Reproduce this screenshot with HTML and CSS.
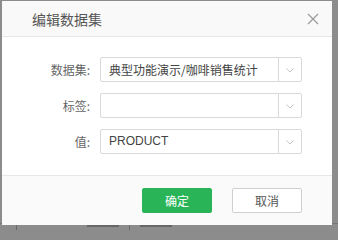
FILE: index.html
```html
<!DOCTYPE html>
<html lang="zh">
<head>
<meta charset="utf-8">
<link rel="stylesheet" href="styles.css">
</head>
<body>
<div class="page">
  <div class="bg-row">
    <span class="bg-cell bg-first"></span>
    <span class="bg-cell bg-mid"><i class="bg-mark"></i></span>
    <span class="bg-cell bg-last"><i class="bg-mark"></i></span>
  </div>
</div>
<div class="dialog">
  <div class="dlg-header">
    <span class="dlg-title">编辑数据集</span>
    <svg class="dlg-close" width="12" height="12" viewBox="0 0 12 12"><path d="M1 1L11 11M11 1L1 11" stroke="#9a9a9a" stroke-width="1.2" fill="none"/></svg>
  </div>
  <div class="dlg-body">
    <div class="form-row">
      <label class="form-label">数据集:</label>
      <div class="combo">
        <span class="combo-text">典型功能演示/咖啡销售统计</span>
        <span class="combo-arrow"><svg width="8" height="5" viewBox="0 0 8 5"><path d="M0.5 0.5L4 4L7.5 0.5" stroke="#c4c4c4" stroke-width="1" fill="none"/></svg></span>
      </div>
    </div>
    <div class="form-row">
      <label class="form-label">标签:</label>
      <div class="combo">
        <span class="combo-text"></span>
        <span class="combo-arrow"><svg width="8" height="5" viewBox="0 0 8 5"><path d="M0.5 0.5L4 4L7.5 0.5" stroke="#c4c4c4" stroke-width="1" fill="none"/></svg></span>
      </div>
    </div>
    <div class="form-row">
      <label class="form-label">值:</label>
      <div class="combo">
        <span class="combo-text latin">PRODUCT</span>
        <span class="combo-arrow"><svg width="8" height="5" viewBox="0 0 8 5"><path d="M0.5 0.5L4 4L7.5 0.5" stroke="#c4c4c4" stroke-width="1" fill="none"/></svg></span>
      </div>
    </div>
  </div>
  <div class="dlg-footer">
    <button class="btn btn-primary">确定</button>
    <button class="btn btn-default">取消</button>
  </div>
</div>
</body>
</html>
```
FILE: styles.css
```css
html, body {
  margin: 0;
  padding: 0;
}
body {
  width: 338px;
  height: 230px;
  overflow: hidden;
  background: #8c8c8c;
  font-family: "Liberation Sans", "Noto Sans CJK SC", sans-serif;
  position: relative;
}
.page {
  height: 230px;
  display: flex;
  flex-direction: column;
  justify-content: flex-end;
}
.bg-row {
  display: flex;
  height: 6px;
  border-top: 1px solid #777;
  overflow: hidden;
}
.bg-cell {
  border-right: 1px solid #6a6a6a;
  display: flex;
  align-items: flex-start;
  padding-top: 1px;
}
.bg-first { width: 16px; }
.bg-mid { width: 113px; justify-content: flex-end; padding-right: 10px; box-sizing: border-box; }
.bg-last { padding-left: 10px; border-right: none; }
.bg-mark {
  display: block;
  width: 32px;
  height: 2px;
  background: #666;
}

.dialog {
  position: absolute;
  left: 2px;
  top: 1px;
  width: 330px;
  height: 224px;
  background: #fff;
  display: flex;
  flex-direction: column;
}
.dlg-header {
  height: 35px;
  border-bottom: 1px solid #e6e6e6;
  background: #f9f9f9;
  display: flex;
  align-items: center;
  justify-content: space-between;
  padding: 0 13px 0 30px;
}
.dlg-title {
  font-size: 14px;
  color: #555;
  font-family: "Noto Sans CJK SC", sans-serif;
}
.dlg-close {
  display: block;
  margin-top: 1px;
}
.dlg-body {
  flex: 1;
  padding: 20px 30px 0 0;
  display: flex;
  flex-direction: column;
  gap: 11px;
}
.form-row {
  display: flex;
  align-items: center;
  height: 25px;
}
.form-label {
  width: 88px;
  text-align: right;
  padding-right: 10px;
  font-size: 12px;
  color: #666;
  font-family: "Noto Sans CJK SC", sans-serif;
}
.combo {
  flex: 1;
  height: 25px;
  box-sizing: border-box;
  border: 1px solid #d9d9d9;
  border-radius: 2px;
  display: flex;
  align-items: stretch;
}
.combo-text {
  flex: 1;
  padding-left: 8px;
  font-size: 12px;
  color: #444;
  line-height: 23px;
  font-family: "Noto Sans CJK SC", sans-serif;
  white-space: nowrap;
  overflow: hidden;
}
.combo-text.latin {
  font-family: "Liberation Sans", sans-serif;
}
.combo-arrow {
  width: 22px;
  border-left: 1px solid #d9d9d9;
  display: flex;
  align-items: center;
  justify-content: center;
}
.combo-arrow svg { display: block; margin-top: 1px; }
.dlg-footer {
  height: 49px;
  border-top: 1px solid #e6e6e6;
  background: #fafafa;
  display: flex;
  align-items: center;
  justify-content: flex-end;
  gap: 20px;
  padding: 0 30px 0 0;
}
.btn {
  width: 70px;
  height: 25px;
  border-radius: 2px;
  font-size: 12px;
  font-family: "Noto Sans CJK SC", sans-serif;
  padding: 0;
  cursor: pointer;
  box-sizing: border-box;
}
.btn-primary {
  background: #29b557;
  border: 1px solid #29b557;
  color: #fff;
}
.btn-default {
  background: #fff;
  border: 1px solid #cfcfcf;
  color: #555;
}
```
